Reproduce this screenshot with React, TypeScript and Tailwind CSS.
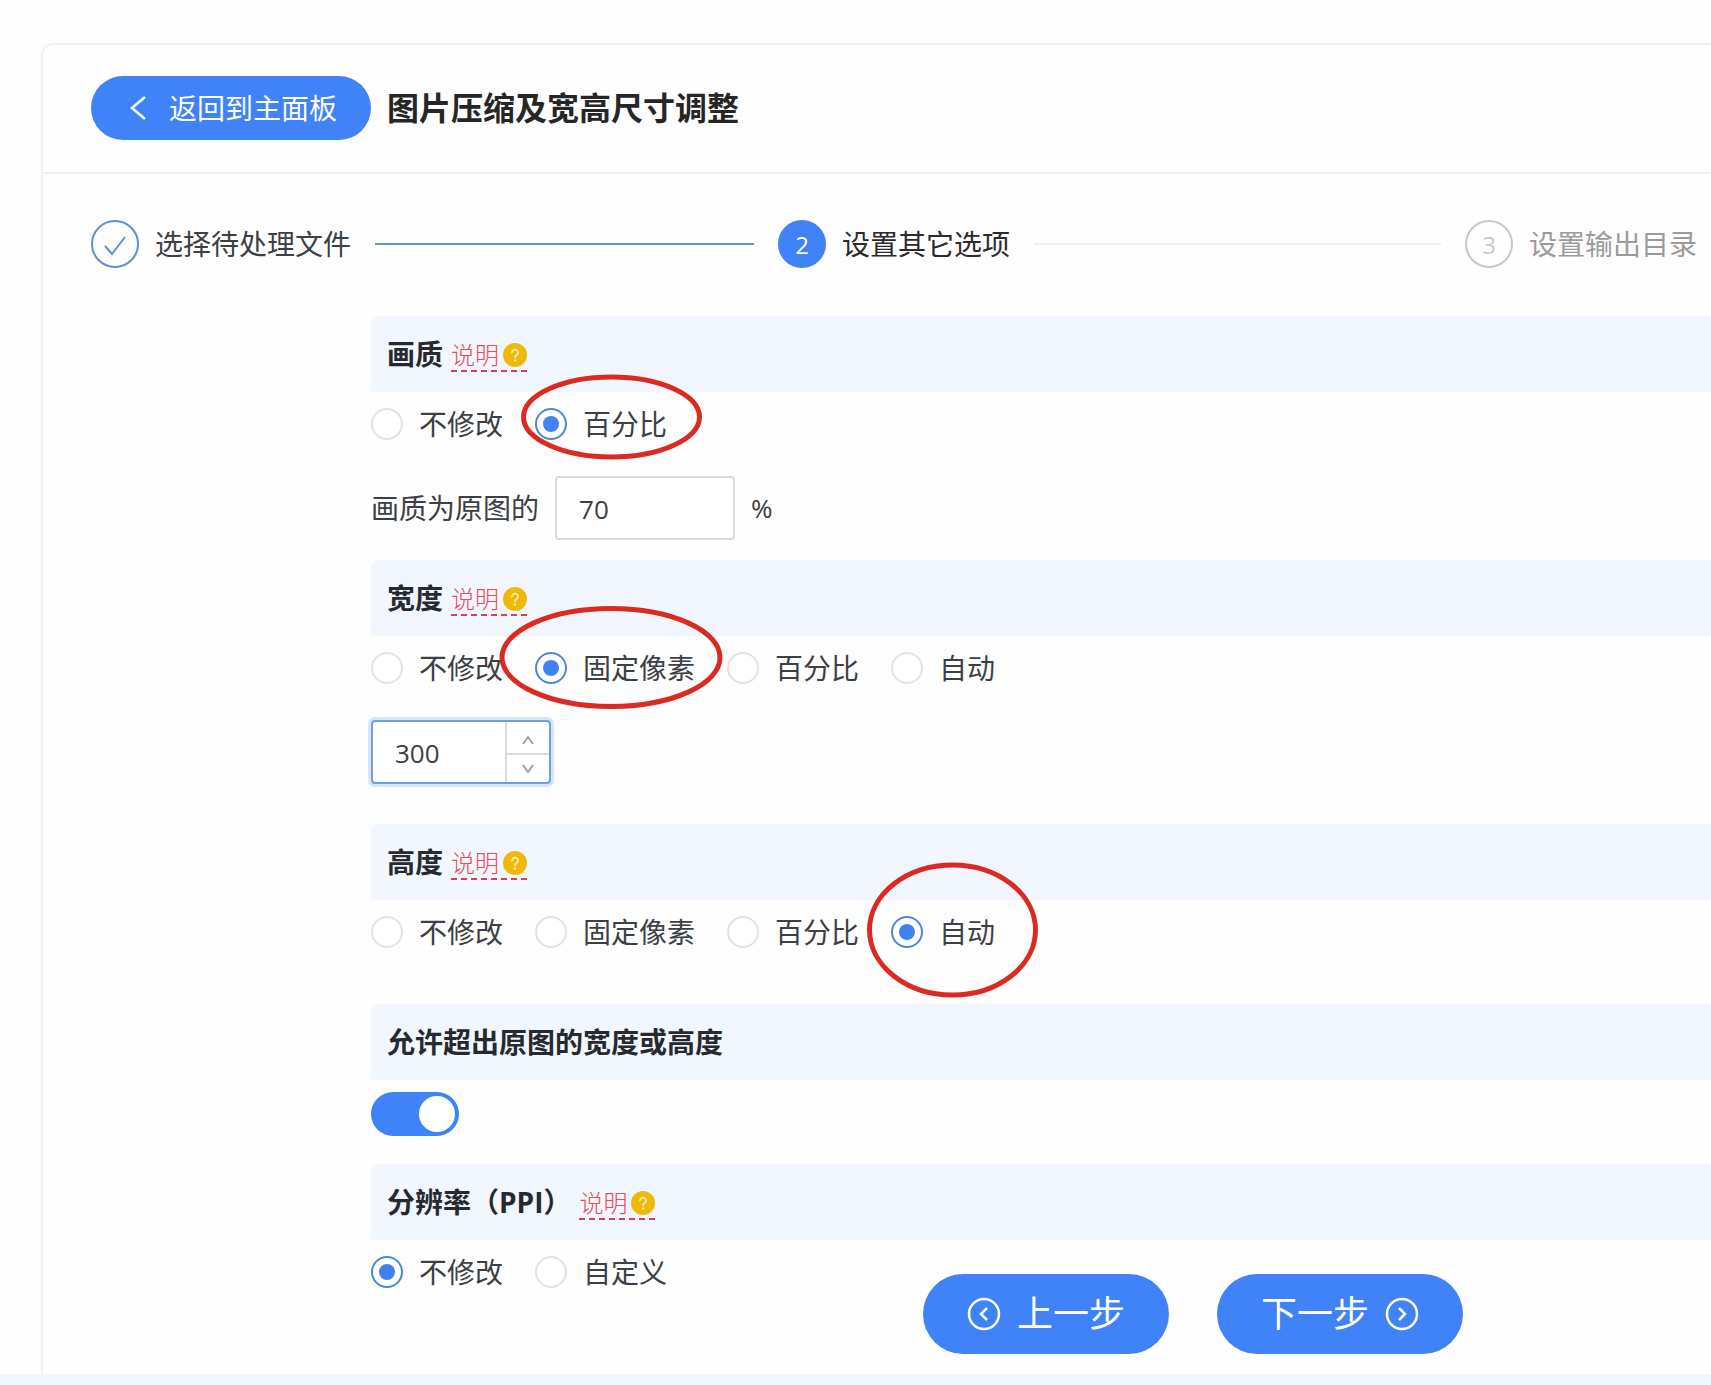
import { useState } from 'react';
import type { ReactNode } from 'react';

type Mark = { box: string; rx: number; ry: number; w: number; h: number };

// Hand-drawn style red rings around the recommended options
const MARKS: Record<string, Mark> = {
  quality: { box: '-left-3.5 -top-[30px]', w: 181, h: 86, rx: 88, ry: 40 },
  width: { box: '-left-9 -top-[42px]', w: 224, h: 103, rx: 109, ry: 49 },
  height: { box: '-left-6 -top-[50px]', w: 171, h: 136, rx: 83, ry: 65 },
};

function Ring({ mark }: { mark: Mark }) {
  return (
    <svg
      className={`pointer-events-none absolute z-10 max-w-none ${mark.box}`}
      width={mark.w}
      height={mark.h}
      aria-hidden="true"
    >
      <ellipse
        cx={mark.w / 2}
        cy={mark.h / 2}
        rx={mark.rx}
        ry={mark.ry}
        fill="none"
        stroke="#dc2a22"
        strokeWidth="5"
      />
    </svg>
  );
}

function HelpLink() {
  return (
    <button
      type="button"
      className="mt-1 flex h-8 items-center gap-1 border-b-2 border-dashed border-[#d8405a] text-2xl leading-8 font-light text-[#ee4a58]"
    >
      说明
      <svg width="24" height="24" viewBox="0 0 24 24" aria-hidden="true">
        <circle cx="12" cy="12" r="12" fill="#efb90c" />
        <path
          d="M9 9.6a3 3 0 1 1 4.6 2.5c-1 .6-1.6 1.1-1.6 2.2"
          fill="none"
          stroke="#fde9a0"
          strokeWidth="1.8"
          strokeLinecap="round"
        />
        <circle cx="12" cy="17.4" r="1.2" fill="#fde9a0" />
      </svg>
    </button>
  );
}

function SectionTitle({ title, help = true }: { title: string; help?: boolean }) {
  return (
    <div className="flex h-19 items-center gap-2 rounded-tl-lg bg-[#f2f6fe] px-4">
      <h2 className="text-[28px] leading-10 font-bold text-[#262a30]">{title}</h2>
      {help && <HelpLink />}
    </div>
  );
}

function RadioRow({
  name,
  options,
  initial,
  mark,
}: {
  name: string;
  options: string[];
  initial: string;
  mark?: Mark;
}) {
  const [value, setValue] = useState(initial);

  return (
    <div className="flex h-16 items-center gap-8">
      {options.map((option) => (
        <label key={option} className="relative flex items-center gap-4 leading-10 whitespace-nowrap">
          <input
            type="radio"
            name={name}
            checked={value === option}
            onChange={() => setValue(option)}
            className="grid size-8 shrink-0 appearance-none place-items-center rounded-full border-2 border-[#e2e2e2] bg-white before:size-4 before:rounded-full checked:border-[#4a87dc] checked:before:bg-[#4083f0]"
          />
          {option}
          {mark && option === initial && <Ring mark={mark} />}
        </label>
      ))}
    </div>
  );
}

function Step({
  icon,
  label,
  circle,
  text,
  line,
}: {
  icon: ReactNode;
  label: string;
  circle: string;
  text: string;
  line?: string;
}) {
  return (
    <li className={`flex items-center ${line ? 'flex-1' : ''}`}>
      <span className={`flex size-12 shrink-0 items-center justify-center rounded-full border-2 pt-0.5 text-2xl ${circle}`}>
        {icon}
      </span>
      <span className={`ml-4 leading-10 whitespace-nowrap ${text}`}>{label}</span>
      {line && <span className={`mx-6 h-0.5 flex-1 ${line}`} />}
    </li>
  );
}

export default function App() {
  const [quality, setQuality] = useState('70');
  const [width, setWidth] = useState(300);
  const [allow, setAllow] = useState(true);

  return (
    <div className="min-h-screen overflow-hidden bg-[#f2f6fe] pb-2.5 font-['Open_Sans','Noto_Sans_CJK_SC',sans-serif] text-[28px] text-[#3c3f43]">
      <div className="bg-[#fefefe] pt-[43px] pl-[41px]">
        <main className="rounded-tl-xl border-t-2 border-l-2 border-[#f1f1f1]">
          {/* Header */}
          <header className="flex items-center gap-4 border-b-2 border-[#f1f1f1] pt-[31px] pb-8 pl-12">
            <button
              type="button"
              className="flex h-16 w-[280px] items-center rounded-full bg-[#4083f8] pl-9 whitespace-nowrap text-white"
            >
              <svg width="24" height="24" viewBox="0 0 24 24" fill="none" stroke="currentColor" strokeWidth="2.5" aria-hidden="true">
                <path d="M18 1 5 12l13 11" />
              </svg>
              <span className="ml-[18px]">返回到主面板</span>
            </button>
            <h1 className="text-[32px] leading-10 font-bold text-[#262626]">图片压缩及宽高尺寸调整</h1>
          </header>

          {/* Steps */}
          <ol className="flex pt-[46px] pr-3.5 pl-12">
            <Step
              icon={
                <svg width="24" height="24" viewBox="0 0 24 24" fill="none" stroke="currentColor" strokeWidth="2" aria-hidden="true">
                  <path d="m2 13 7 8L22 4" />
                </svg>
              }
              label="选择待处理文件"
              circle="border-[#5c8fdc] text-[#5c8fdc]"
              text="text-[#3c3f43]"
              line="bg-[#5c97d4]"
            />
            <Step icon="2" label="设置其它选项" circle="border-[#4083f8] bg-[#4083f8] text-white" text="text-[#2b2b2b]" line="bg-[#f0f0f0]" />
            <Step icon="3" label="设置输出目录" circle="border-[#c8c8c8] text-[#c8c8c8]" text="text-[#9b9b9b]" />
          </ol>

          {/* Options */}
          <div className="pt-12 pl-[328px]">
            <section>
              <SectionTitle title="画质" />
              <RadioRow name="quality" options={['不修改', '百分比']} initial="百分比" mark={MARKS.quality} />
              <div className="my-5 flex h-16 items-center gap-4">
                <label htmlFor="quality-value">画质为原图的</label>
                <input
                  id="quality-value"
                  type="text"
                  value={quality}
                  onChange={(e) => setQuality(e.target.value)}
                  className="h-16 w-[180px] rounded-sm border-2 border-[#dcdcdc] bg-white px-[22px] pt-0.5 text-[26px] outline-none"
                />
                <span className="text-[26px]">%</span>
              </div>
            </section>

            <section>
              <SectionTitle title="宽度" />
              <RadioRow
                name="width"
                options={['不修改', '固定像素', '百分比', '自动']}
                initial="固定像素"
                mark={MARKS.width}
              />
              <div className="mt-5 mb-10 flex h-16 w-[180px] overflow-hidden rounded-sm border-2 border-[#6e9fe0] bg-white shadow-[0_0_0_3px_#d6e6fc]">
                <input
                  type="text"
                  aria-label="宽度"
                  value={width}
                  onChange={(e) => setWidth(Number(e.target.value) || 0)}
                  className="w-full min-w-0 flex-1 pt-0.5 pl-[22px] text-[26px] outline-none"
                />
                <div className="flex w-11 shrink-0 flex-col border-l-2 border-[#dcdcdc] text-[#a0a0a0]">
                  <button
                    type="button"
                    aria-label="+"
                    onClick={() => setWidth(width + 1)}
                    className="flex flex-1 items-center justify-center border-b-2 border-[#dcdcdc] pt-1"
                  >
                    <svg width="14" height="12" viewBox="0 0 14 12" fill="none" stroke="currentColor" strokeWidth="2" aria-hidden="true">
                      <path d="m2 10 5-7 5 7" />
                    </svg>
                  </button>
                  <button
                    type="button"
                    aria-label="-"
                    onClick={() => setWidth(width - 1)}
                    className="flex flex-1 items-center justify-center"
                  >
                    <svg width="14" height="12" viewBox="0 0 14 12" fill="none" stroke="currentColor" strokeWidth="2" aria-hidden="true">
                      <path d="m2 2 5 7 5-7" />
                    </svg>
                  </button>
                </div>
              </div>
            </section>

            <section className="mb-10">
              <SectionTitle title="高度" />
              <RadioRow
                name="height"
                options={['不修改', '固定像素', '百分比', '自动']}
                initial="自动"
                mark={MARKS.height}
              />
            </section>

            <section>
              <SectionTitle title="允许超出原图的宽度或高度" help={false} />
              <input
                type="checkbox"
                role="switch"
                aria-label="允许超出原图的宽度或高度"
                checked={allow}
                onChange={(e) => setAllow(e.target.checked)}
                className="mt-3 mb-7 flex h-11 w-[88px] appearance-none items-center rounded-full bg-[#bfbfbf] px-1 before:size-9 before:rounded-full before:bg-white checked:justify-end checked:bg-[#4083f8]"
              />
            </section>

            <section>
              <SectionTitle title="分辨率（PPI）" />
              <RadioRow name="ppi" options={['不修改', '自定义']} initial="不修改" />
            </section>
          </div>

          {/* Prev / next */}
          <footer className="-mt-[30px] flex justify-center gap-12 pb-5 pl-[632px]">
            <button
              type="button"
              className="flex h-20 w-[246px] items-center justify-center gap-4 rounded-full bg-[#4083f8] text-4xl text-white"
            >
              <svg width="34" height="34" viewBox="0 0 34 34" fill="none" stroke="currentColor" strokeWidth="2.5" aria-hidden="true">
                <circle cx="17" cy="17" r="15" />
                <path d="m20 11-6 6 6 6" />
              </svg>
              上一步
            </button>
            <button
              type="button"
              className="flex h-20 w-[246px] items-center justify-center gap-4 rounded-full bg-[#4083f8] text-4xl text-white"
            >
              下一步
              <svg width="34" height="34" viewBox="0 0 34 34" fill="none" stroke="currentColor" strokeWidth="2.5" aria-hidden="true">
                <circle cx="17" cy="17" r="15" />
                <path d="m14 11 6 6-6 6" />
              </svg>
            </button>
          </footer>
        </main>
      </div>
    </div>
  );
}
